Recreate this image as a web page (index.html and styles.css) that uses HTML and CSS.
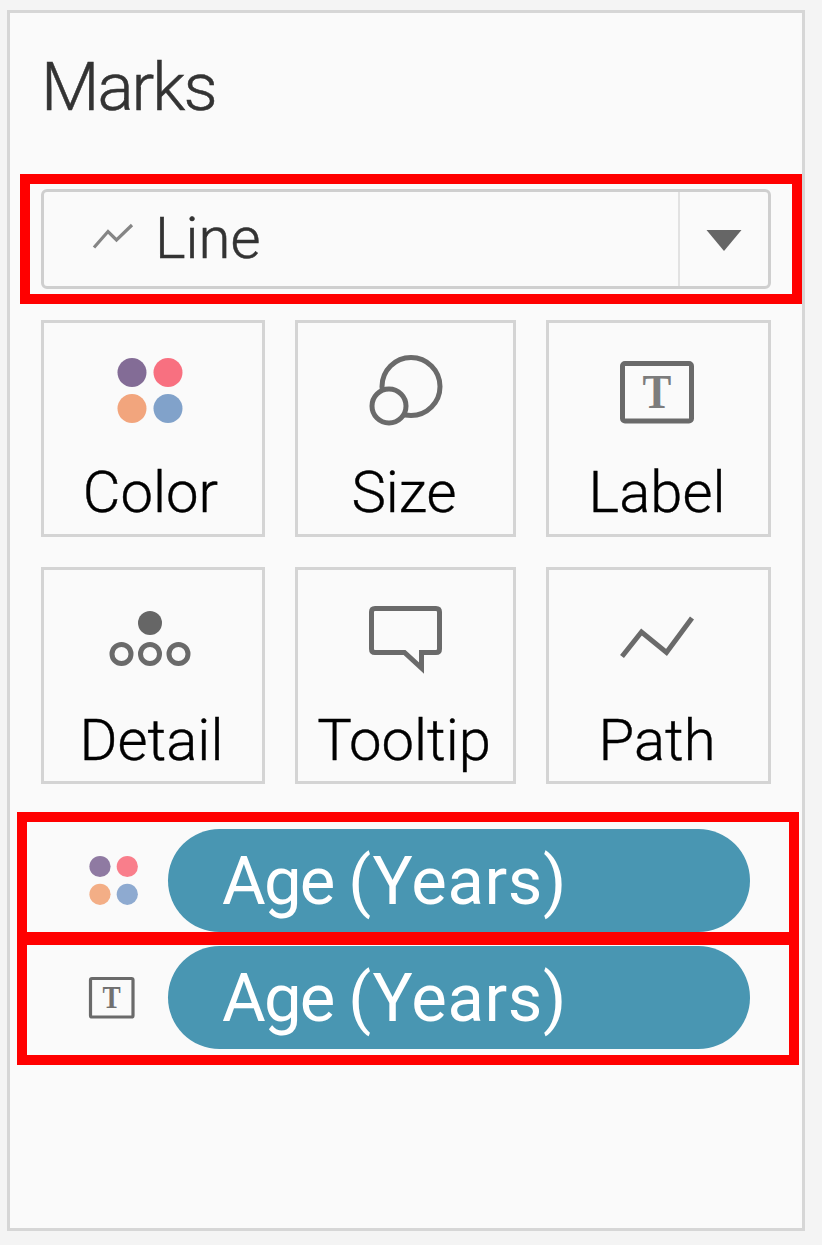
FILE: index.html
```html
<!DOCTYPE html>
<html lang="en">
<head>
<meta charset="utf-8">
<title>Marks</title>
<link rel="stylesheet" href="styles.css">
</head>
<body>
<main class="panel">
  <h1 class="title">Marks</h1>
  <section class="highlight highlight-select">
    <div class="select">
      <svg class="select-icon" viewBox="0 0 42 30"><path d="M2 25.5 16 9.500 24.500 18 40 3"/></svg>
      <span class="select-text">Line</span>
      <span class="select-arrow"><svg class="arrow" viewBox="0 0 36 21"><path d="M.5 0h35L18 21z"/></svg></span>
    </div>
  </section>
  <section class="tiles">
    <div class="tile">
      <svg class="icon" viewBox="44 323 218 139"><circle cx="132" cy="372.500" r="14.500" fill="#836c96"/><circle cx="168" cy="372.500" r="14.500" fill="#f87080"/><circle cx="132" cy="408.500" r="14.500" fill="#f2a57d"/><circle cx="168" cy="408.500" r="14.500" fill="#81a2ca"/></svg>
      <span class="label shifted">Color</span>
    </div>
    <div class="tile">
      <svg class="icon line" viewBox="298 323 215 139"><circle cx="411" cy="386.500" r="29"/><circle cx="389" cy="406" r="17" fill="#fafafa"/></svg>
      <span class="label">Size</span>
    </div>
    <div class="tile">
      <svg class="icon line" viewBox="549 323 219 139"><rect x="622.500" y="363.500" width="69" height="57.500" rx="2.500"/><text class="glyph" transform="translate(657 408) scale(.88 1)">T</text></svg>
      <span class="label">Label</span>
    </div>
    <div class="tile low">
      <svg class="icon line" viewBox="44 570 218 140"><circle cx="150" cy="623" r="12" class="solid"/><circle cx="121.500" cy="654" r="9.500"/><circle cx="150" cy="654" r="9.500"/><circle cx="178.500" cy="654" r="9.500"/></svg>
      <span class="label">Detail</span>
    </div>
    <div class="tile low">
      <svg class="icon line" viewBox="298 570 215 140"><path d="M375 608.500h61q3.500 0 3.500 3.500V649q0 3.500-3.500 3.500h-14.500V668L404.500 652.500h-29.500q-3.500 0-3.500-3.500v-37q0-3.500 3.500-3.500z"/></svg>
      <span class="label">Tooltip</span>
    </div>
    <div class="tile low">
      <svg class="icon line" viewBox="549 570 219 140"><path d="M622 656.500 641.500 632 666.500 652.500 692 618"/></svg>
      <span class="label">Path</span>
    </div>
  </section>
  <section class="highlight highlight-field">
    <svg class="field-icon" viewBox="86 850 52 62"><circle cx="100" cy="866.500" r="10.600" fill="#8f7aa2"/><circle cx="127.300" cy="866.500" r="10.600" fill="#f97e8b"/><circle cx="100" cy="894.300" r="10.600" fill="#f3ae86"/><circle cx="127.300" cy="894.300" r="10.600" fill="#8eaad0"/></svg>
    <span class="pill"><span class="pill-text"><span class="tight">Age </span>(Years)</span></span>
  </section>
  <section class="highlight highlight-field second">
    <svg class="field-icon line thin" viewBox="86 967 52 62"><rect x="90.500" y="978.500" width="42.500" height="38.500" rx="1.500"/><text class="glyph small" transform="translate(111.700 1007.500) scale(.88 1)">T</text></svg>
    <span class="pill"><span class="pill-text"><span class="tight">Age </span>(Years)</span></span>
  </section>
</main>
</body>
</html>
```
FILE: styles.css
```css
* { box-sizing: border-box; }
body {
  margin: 0;
  padding: 10px 17px 14px 7px;
  height: 1245px;
  background: #f4f4f4;
  font-family: Roboto, "Liberation Sans", sans-serif;
}
.panel {
  width: 798px;
  height: 1221px;
  border: 3px solid #d6d6d6;
  background: #fafafa;
  overflow: hidden;
}
.title {
  margin: 34px 0 0 31px;
  height: 80px;
  line-height: 80px;
  font-size: 67.5px;
  font-weight: 300;
  letter-spacing: -2px;
  color: #333;
  -webkit-text-stroke: .5px #333;
  white-space: nowrap;
}
.highlight {
  width: 782px;
  height: 130px;
  border: 10px solid #f00;
}
.highlight-select {
  margin: 47px 0 0 10px;
  padding: 5px 11px;
}
.select {
  display: flex;
  align-items: center;
  width: 730px;
  height: 100px;
  padding-left: 48px;
  border: 3px solid #cfcfcf;
  border-radius: 6px;
}
.select-icon {
  width: 42px;
  height: 30px;
  margin: 0 21px 4px 0;
  fill: none;
  stroke: #858585;
  stroke-width: 3.200;
}
.select-text {
  flex: 1;
  height: 60px;
  margin-bottom: 3px;
  line-height: 60px;
  font-size: 58px;
  font-weight: 300;
  color: #333;
  -webkit-text-stroke: .5px #333;
  white-space: nowrap;
}
.select-arrow {
  display: flex;
  align-items: center;
  justify-content: center;
  width: 90px;
  height: 94px;
  border-left: 2px solid #e2e2e2;
}
.arrow { width: 36px; height: 21px; fill: #666; margin-top: 2px; }
.tiles {
  display: grid;
  grid-template-columns: 224px 221px 225px;
  grid-template-rows: 217px 217px;
  gap: 30px;
  margin: 16px 0 0 31px;
}
.tile {
  display: flex;
  flex-direction: column;
  align-items: center;
  border: 3px solid #d4d4d4;
}
.icon { width: 100%; height: 139px; flex: none; }
.low .icon { height: 140px; }
.line { fill: none; stroke: #6a6a6a; stroke-width: 5; }
.thin { stroke-width: 3.200; }
.solid { fill: #666; stroke: none; }
.glyph {
  fill: #7c7c7c;
  stroke: none;
  text-anchor: middle;
  font: bold 49px "Liberation Serif", serif;
}
.small { font-size: 31px; fill: #707070; }
.label {
  height: 60px;
  margin-right: 3px;
  line-height: 60px;
  font-size: 58px;
  font-weight: 300;
  color: #000;
  -webkit-text-stroke: .4px #000;
  white-space: nowrap;
}
.tile .shifted { margin-right: 5px; }
.highlight-field {
  display: flex;
  margin: 28px 0 0 7px;
  padding: 7px 0 0 59px;
}
.highlight-field.second { margin-top: -7px; padding-top: 1px; }
.field-icon { width: 52px; height: 62px; margin: 21px 30px 0 0; flex: none; }
.pill {
  width: 582px;
  height: 103px;
  padding-left: 54px;
  border-radius: 52px;
  background: #4996b2;
  color: #fff;
}
.pill-text {
  display: block;
  height: 103px;
  line-height: 105px;
  font-size: 67px;
  letter-spacing: .6px;
  white-space: nowrap;
}
.tight { letter-spacing: -1.8px; }
```
